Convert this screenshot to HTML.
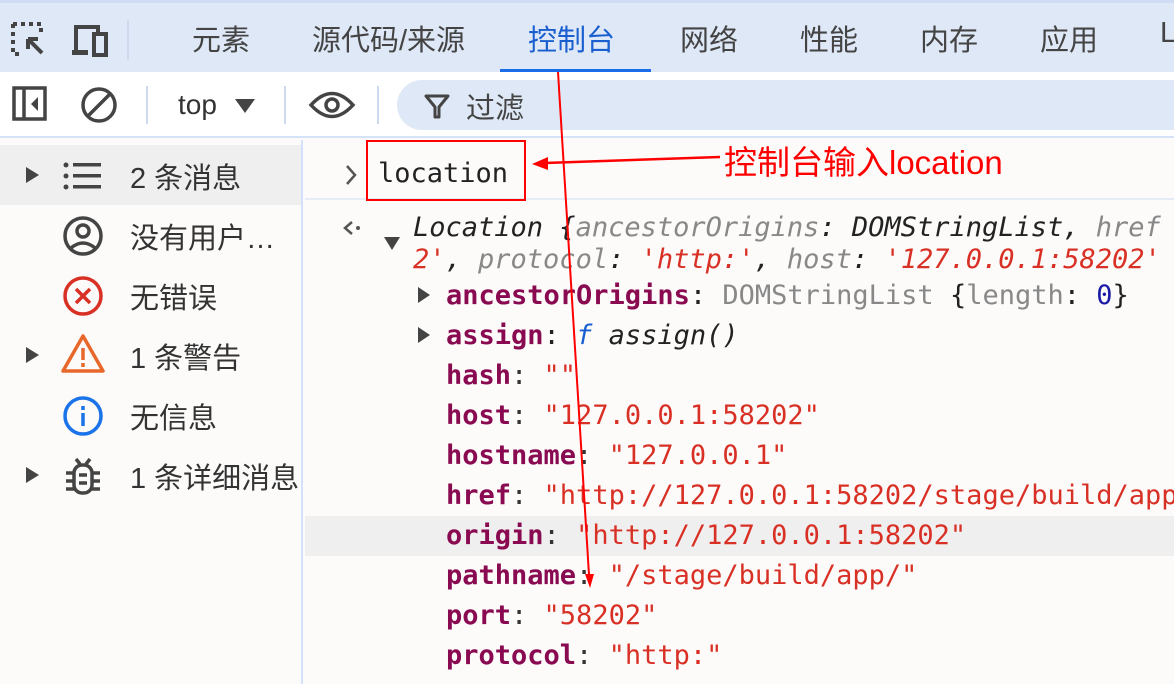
<!DOCTYPE html>
<html><head><meta charset="utf-8"><style>
*{margin:0;padding:0;box-sizing:border-box}
body{width:1174px;height:684px;overflow:hidden;background:#fcfbfa;font-family:"Liberation Sans","Noto Sans CJK SC",sans-serif;position:relative;color:#333}
.abs{position:absolute}
.tabs{left:0;top:0;width:1174px;height:72px;background:#dfe8f6;border-top:3px solid #cfdcf3}
.tab{position:absolute;top:14px;font-size:29px;color:#444}
.tb{left:0;top:72px;width:1174px;height:66px;background:#fff;border-bottom:2px solid #d6e2f7}
.side{left:0;top:140px;width:303px;height:544px;border-right:2px solid #d3e1fa}
.si{position:absolute;left:0;width:301px;height:60px;font-size:29px;color:#333}
.si span.t{position:absolute;left:130px;top:10px}
.tri{position:absolute;left:26px;top:22px;width:0;height:0;border-left:13px solid #444;border-top:8px solid transparent;border-bottom:8px solid transparent}
.mono{font-family:"DejaVu Sans Mono","Liberation Mono",monospace;font-size:27px;position:absolute;white-space:pre;line-height:40px}
.k{color:#8a0a52;font-weight:bold}
.s{color:#d93025}
.g{color:#888}
</style></head><body>
<div class="abs tabs">
  <svg class="abs" style="left:10px;top:18px" width="40" height="40" viewBox="0 0 40 40"><path d="M3 3h28v10M3 3v30h10" stroke="#444" stroke-width="4" stroke-dasharray="4 4" fill="none"/><path d="M18 18l14 14M18 18h10M18 18v10" stroke="#444" stroke-width="4" fill="none"/></svg>
  <svg class="abs" style="left:70px;top:20px" width="40" height="36" viewBox="0 0 40 36"><path d="M6 30V4h22v6" stroke="#444" stroke-width="4" fill="none"/><rect x="2" y="27" width="16" height="5" fill="#444"/><rect x="24" y="11" width="12" height="21" stroke="#444" stroke-width="4" fill="none"/></svg>
  <div class="abs" style="left:127px;top:17px;width:2px;height:40px;background:#cdd9ef"></div>
  <div class="tab" style="left:192px">元素</div>
  <div class="tab" style="left:312px">源代码/来源</div>
  <div class="tab" style="left:528px;color:#1a5fd0">控制台</div>
  <div class="tab" style="left:680px">网络</div>
  <div class="tab" style="left:800px">性能</div>
  <div class="tab" style="left:920px">内存</div>
  <div class="tab" style="left:1040px">应用</div>
  <div class="tab" style="left:1160px">L</div>
  <div class="abs" style="left:500px;top:66px;width:151px;height:4px;background:#1a6ce8"></div>
</div>
<div class="abs tb">
  <svg class="abs" style="left:12px;top:14px" width="36" height="36" viewBox="0 0 36 36"><rect x="2" y="2" width="31" height="31" stroke="#444" stroke-width="3.5" fill="none"/><path d="M12 2v31" stroke="#444" stroke-width="3.5"/><path d="M26 11l-7 7 7 7z" fill="#444"/></svg>
  <svg class="abs" style="left:80px;top:14px" width="38" height="38" viewBox="0 0 38 38"><circle cx="19" cy="19" r="16" stroke="#444" stroke-width="3.5" fill="none"/><path d="M8 30L30 8" stroke="#444" stroke-width="3.5"/></svg>
  <div class="abs" style="left:146px;top:14px;width:2px;height:38px;background:#cdd9ef"></div>
  <div class="abs" style="left:178px;top:17px;font-size:28px;color:#333">top</div>
  <div class="abs" style="left:235px;top:27px;width:0;height:0;border-top:14px solid #444;border-left:10px solid transparent;border-right:10px solid transparent"></div>
  <div class="abs" style="left:284px;top:14px;width:2px;height:38px;background:#cdd9ef"></div>
  <svg class="abs" style="left:308px;top:18px" width="48" height="30" viewBox="0 0 48 30"><path d="M3 15Q24 -8 45 15Q24 38 3 15z" stroke="#444" stroke-width="3.5" fill="none"/><circle cx="24" cy="15" r="6" stroke="#444" stroke-width="3.5" fill="none"/></svg>
  <div class="abs" style="left:377px;top:14px;width:2px;height:38px;background:#cdd9ef"></div>
  <div class="abs" style="left:397px;top:8px;width:800px;height:50px;border-radius:25px;background:#dfe8f6"></div>
  <svg class="abs" style="left:424px;top:21px" width="26" height="26" viewBox="0 0 26 26"><path d="M2 3h22L15 14v10h-4V14z" stroke="#444" stroke-width="3" fill="none" stroke-linejoin="round"/></svg>
  <div class="abs" style="left:466px;top:13px;font-size:29px;color:#444">过滤</div>
</div>
<div class="abs side">
  <div class="si" style="top:5px;background:#efefef"><div class="tri"></div>
    <svg class="abs" style="left:62px;top:16px" width="40" height="30" viewBox="0 0 40 30"><g fill="#444"><circle cx="4" cy="4" r="2.5"/><circle cx="4" cy="15" r="2.5"/><circle cx="4" cy="26" r="2.5"/><rect x="11" y="2" width="28" height="3.5"/><rect x="11" y="13" width="28" height="3.5"/><rect x="11" y="24" width="28" height="3.5"/></g></svg>
    <span class="t">2 条消息</span></div>
  <div class="si" style="top:65px">
    <svg class="abs" style="left:62px;top:10px" width="42" height="42" viewBox="0 0 42 42"><circle cx="21" cy="21" r="18" stroke="#444" stroke-width="3.5" fill="none"/><circle cx="21" cy="16" r="6" stroke="#444" stroke-width="3.5" fill="none"/><path d="M9 33q12-10 24 0" stroke="#444" stroke-width="3.5" fill="none"/></svg>
    <span class="t">没有用户…</span></div>
  <div class="si" style="top:125px">
    <svg class="abs" style="left:62px;top:10px" width="42" height="42" viewBox="0 0 42 42"><circle cx="21" cy="21" r="18" stroke="#d93025" stroke-width="3.5" fill="none"/><path d="M14 14l14 14M28 14L14 28" stroke="#d93025" stroke-width="3.5"/></svg>
    <span class="t">无错误</span></div>
  <div class="si" style="top:185px"><div class="tri"></div>
    <svg class="abs" style="left:60px;top:8px" width="46" height="42" viewBox="0 0 46 42"><path d="M23 3L43 38H3z" stroke="#e8672a" stroke-width="3.5" fill="none" stroke-linejoin="round"/><path d="M23 15v12M23 30v4" stroke="#e8672a" stroke-width="3.5"/></svg>
    <span class="t">1 条警告</span></div>
  <div class="si" style="top:245px">
    <svg class="abs" style="left:62px;top:10px" width="42" height="42" viewBox="0 0 42 42"><circle cx="21" cy="21" r="18" stroke="#1a73e8" stroke-width="3.5" fill="none"/><path d="M21 18v13M21 11v4" stroke="#1a73e8" stroke-width="3.5"/></svg>
    <span class="t">无信息</span></div>
  <div class="si" style="top:305px"><div class="tri"></div>
    <svg class="abs" style="left:64px;top:10px" width="38" height="42" viewBox="0 0 38 42"><g stroke="#444" stroke-width="3.5" fill="none"><path d="M12 4l4 5M26 4l-4 5"/><rect x="10" y="10" width="18" height="28" rx="8"/><path d="M2 18h8M28 18h8M2 26h8M28 26h8M2 34h8M28 34h8M15 20h8M15 28h8"/></g></svg>
    <span class="t">1 条详细消息</span></div>
</div>
<div class="abs" style="left:305px;top:198px;width:869px;height:2px;background:#e6ecf6"></div>
<div class="abs" style="left:305px;top:516px;width:869px;height:40px;background:#efefef"></div>
<svg class="abs" style="left:344px;top:164px" width="14" height="22" viewBox="0 0 14 22"><path d="M3 2l8 9-8 9" stroke="#555" stroke-width="2.5" fill="none"/></svg>
<div class="mono" style="left:378px;top:154px;color:#222">location</div>
<svg class="abs" style="left:342px;top:219px" width="22" height="18" viewBox="0 0 22 18"><path d="M10 3L3 9l7 6" stroke="#555" stroke-width="2.5" fill="none"/><circle cx="16" cy="9" r="2" fill="#555"/></svg>
<div class="abs" style="left:384px;top:237px;width:0;height:0;border-top:13px solid #444;border-left:8px solid transparent;border-right:8px solid transparent"></div>
<div class="mono" style="left:413px;top:208px;font-style:italic;color:#222">Location {<span class="g">ancestorOrigins</span>: DOMStringList, <span class="g">href</span></div>
<div class="mono" style="left:413px;top:240px;font-style:italic;color:#222"><span class="s">2'</span>, <span class="g">protocol</span>: <span class="s">'http:'</span>, <span class="g">host</span>: <span class="s">'127.0.0.1:58202'</span></div>
<div class="abs" style="left:418px;top:287px;width:0;height:0;border-left:12px solid #444;border-top:8px solid transparent;border-bottom:8px solid transparent"></div>
<div class="abs" style="left:418px;top:327px;width:0;height:0;border-left:12px solid #444;border-top:8px solid transparent;border-bottom:8px solid transparent"></div>
<div class="mono" style="left:446px;top:276px;color:#222"><span class="k">ancestorOrigins</span>: <span class="g">DOMStringList</span> {<span class="g">length</span>: <span style="color:#1a1aa6">0</span>}</div>
<div class="mono" style="left:446px;top:316px;color:#222"><span class="k">assign</span>: <i style="color:#1a5fd0">f</i> <i>assign()</i></div>
<div class="mono" style="left:446px;top:356px"><span class="k">hash</span>: <span class="s">""</span></div>
<div class="mono" style="left:446px;top:396px"><span class="k">host</span>: <span class="s">"127.0.0.1:58202"</span></div>
<div class="mono" style="left:446px;top:436px"><span class="k">hostname</span>: <span class="s">"127.0.0.1"</span></div>
<div class="mono" style="left:446px;top:476px"><span class="k">href</span>: <span class="s">"http://127.0.0.1:58202/stage/build/app/"</span></div>
<div class="mono" style="left:446px;top:516px"><span class="k">origin</span>: <span class="s">"http://127.0.0.1:58202"</span></div>
<div class="mono" style="left:446px;top:556px"><span class="k">pathname</span>: <span class="s">"/stage/build/app/"</span></div>
<div class="mono" style="left:446px;top:596px"><span class="k">port</span>: <span class="s">"58202"</span></div>
<div class="mono" style="left:446px;top:636px"><span class="k">protocol</span>: <span class="s">"http:"</span></div>
<div class="abs" style="left:366px;top:140px;width:160px;height:61px;border:2px solid #f00"></div>
<svg class="abs" style="left:0;top:0" width="1174" height="684"><path d="M720 157L545 163" stroke="#f00" stroke-width="2.5"/><path d="M532 164l16-7v13z" fill="#f00"/><path d="M558 72L589 575" stroke="#f00" stroke-width="2"/><path d="M590 588l-5-14h9z" fill="#f00"/></svg>
<div class="abs" style="left:724px;top:136px;font-size:33px;color:#f00">控制台输入location</div>
</body></html>
